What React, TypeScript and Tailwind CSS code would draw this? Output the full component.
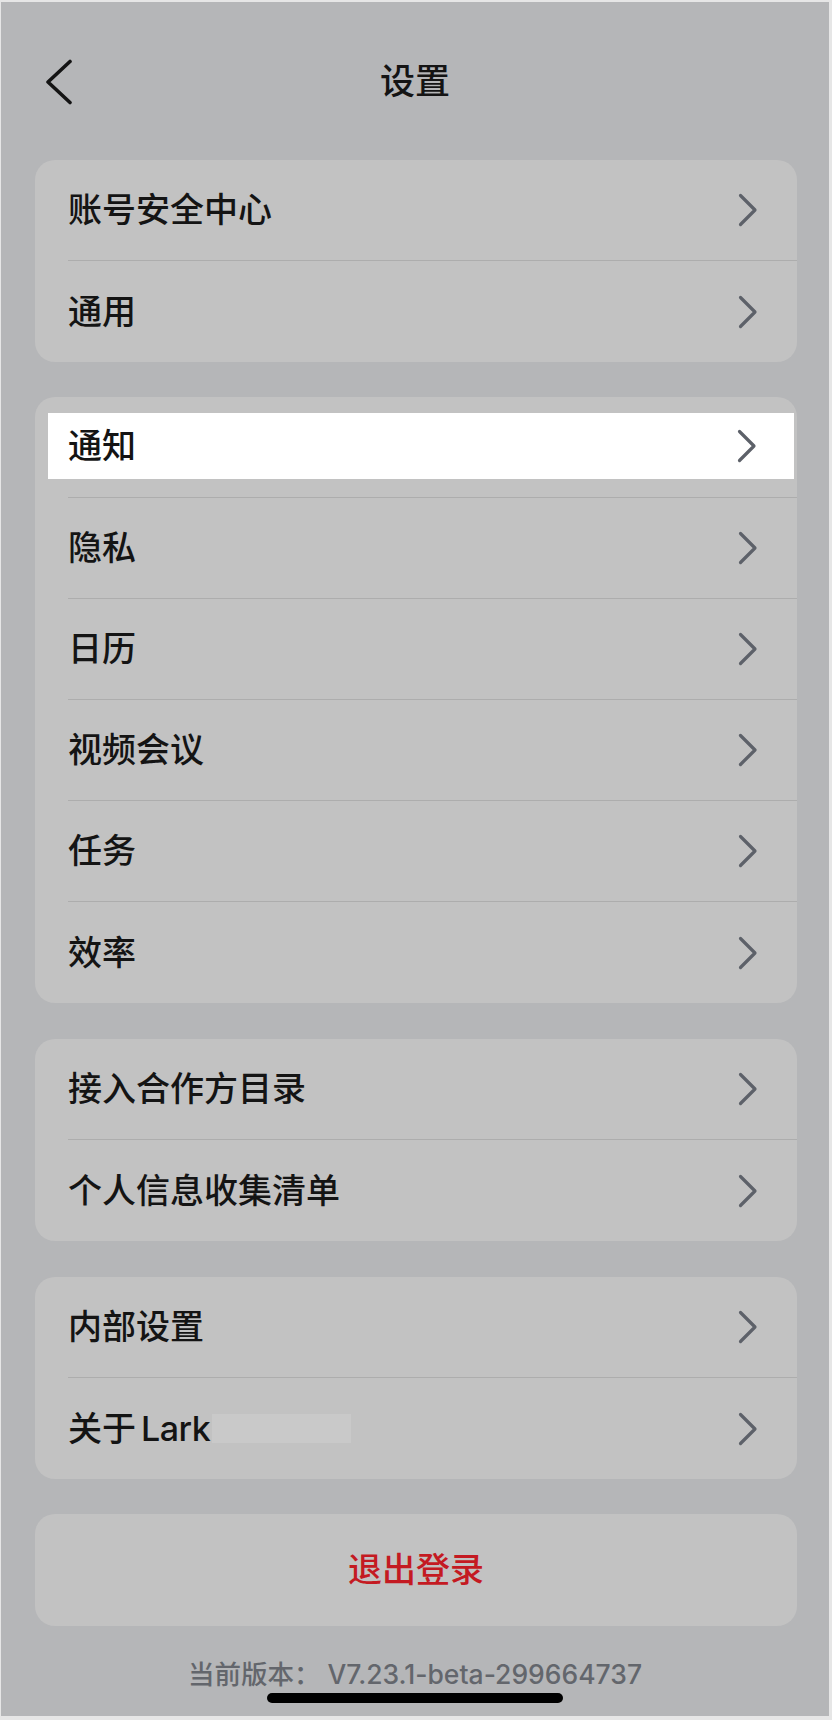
import { ReactNode } from 'react'

const font = { fontFamily: '"Inter", "Noto Sans CJK SC", sans-serif' }

interface RowProps {
    label: ReactNode;
    last?: boolean;
    highlight?: boolean;
}

function Chevron() {
    return (
        <svg width="20" height="34" viewBox="0 0 20 34" fill="none" stroke="#5d6169" strokeWidth={3.2} strokeLinecap="round" strokeLinejoin="round">
            <path d="M2.5 2.5L17 17L2.5 31.5" />
        </svg>
    )
}

function Row(props: RowProps) {
    const border = props.last ? "" : "border-b border-[#adadad]"
    if (props.highlight) {
        return (
            <div className={`flex h-[101px] ${border}`}>
                <div className="flex flex-1 items-center justify-between h-[66px] mt-[16px] -ml-[20px] mr-[3px] pl-[20px] pr-[37px] bg-white">
                    <span className="text-[34px] font-medium text-[#141414] leading-none">{props.label}</span>
                    <Chevron />
                </div>
            </div>
        )
    }
    return (
        <div className={`flex items-center justify-between h-[101px] pr-[39px] ${border}`}>
            <span className="text-[34px] font-medium text-[#141414] leading-none">{props.label}</span>
            <Chevron />
        </div>
    )
}

function Card(props: { items: ReactNode[]; highlightIndex?: number }) {
    return (
        <div className="bg-[#c2c2c2] rounded-[20px] pl-[33px]">
            {props.items.map((item, i) => (
                <Row key={i} label={item} last={i === props.items.length - 1} highlight={i === props.highlightIndex} />
            ))}
        </div>
    )
}

export default function App() {
    return (
        <div className="w-[832px] h-[1720px] bg-[#b5b6b8] border-t-2 border-l border-r-[3px] border-b-4 border-[#e6e6e6] flex flex-col" style={font}>
            <div className="grid grid-cols-[1fr_auto_1fr] items-center h-[158px]">
                <div className="pl-[44px] pt-[1px]">
                    <svg width="28" height="46" viewBox="0 0 28 46" fill="none" stroke="#141414" strokeWidth={3.6} strokeLinecap="round" strokeLinejoin="round">
                        <path d="M25 2.5L3 23L25 43.5" />
                    </svg>
                </div>
                <h1 className="text-[35px] font-medium text-[#141414] leading-none">设置</h1>
                <div />
            </div>

            <div className="flex flex-col pl-[34px] pr-[32px]">
                <Card items={["账号安全中心", "通用"]} />
                <div className="mt-[35px]">
                    <Card items={["通知", "隐私", "日历", "视频会议", "任务", "效率"]} highlightIndex={0} />
                </div>
                <div className="mt-[36px]">
                    <Card items={["接入合作方目录", "个人信息收集清单"]} />
                </div>
                <div className="mt-[36px]">
                    <Card items={[
                        "内部设置",
                        <span className="flex items-center">
                            关于<span className="ml-[5px] tracking-[-0.5px]">Lark</span>
                            <span className="inline-block w-[139px] h-[29px] ml-[2px] bg-[#c9c9c9]" />
                        </span>,
                    ]} />
                </div>
                <button className="mt-[35px] h-[112px] bg-[#c2c2c2] rounded-[20px] flex items-center justify-center text-[34px] font-medium text-[#c41a22] leading-none">
                    退出登录
                </button>
            </div>

            <div className="mt-[30px] text-center text-[26.5px] font-medium leading-[36px] text-[#63666c]">
                当前版本：&nbsp;V7.23.1-beta-299664737
            </div>
            <div className="mt-[1px] mx-auto w-[296px] h-[10px] rounded-full bg-black" />
        </div>
    )
}
